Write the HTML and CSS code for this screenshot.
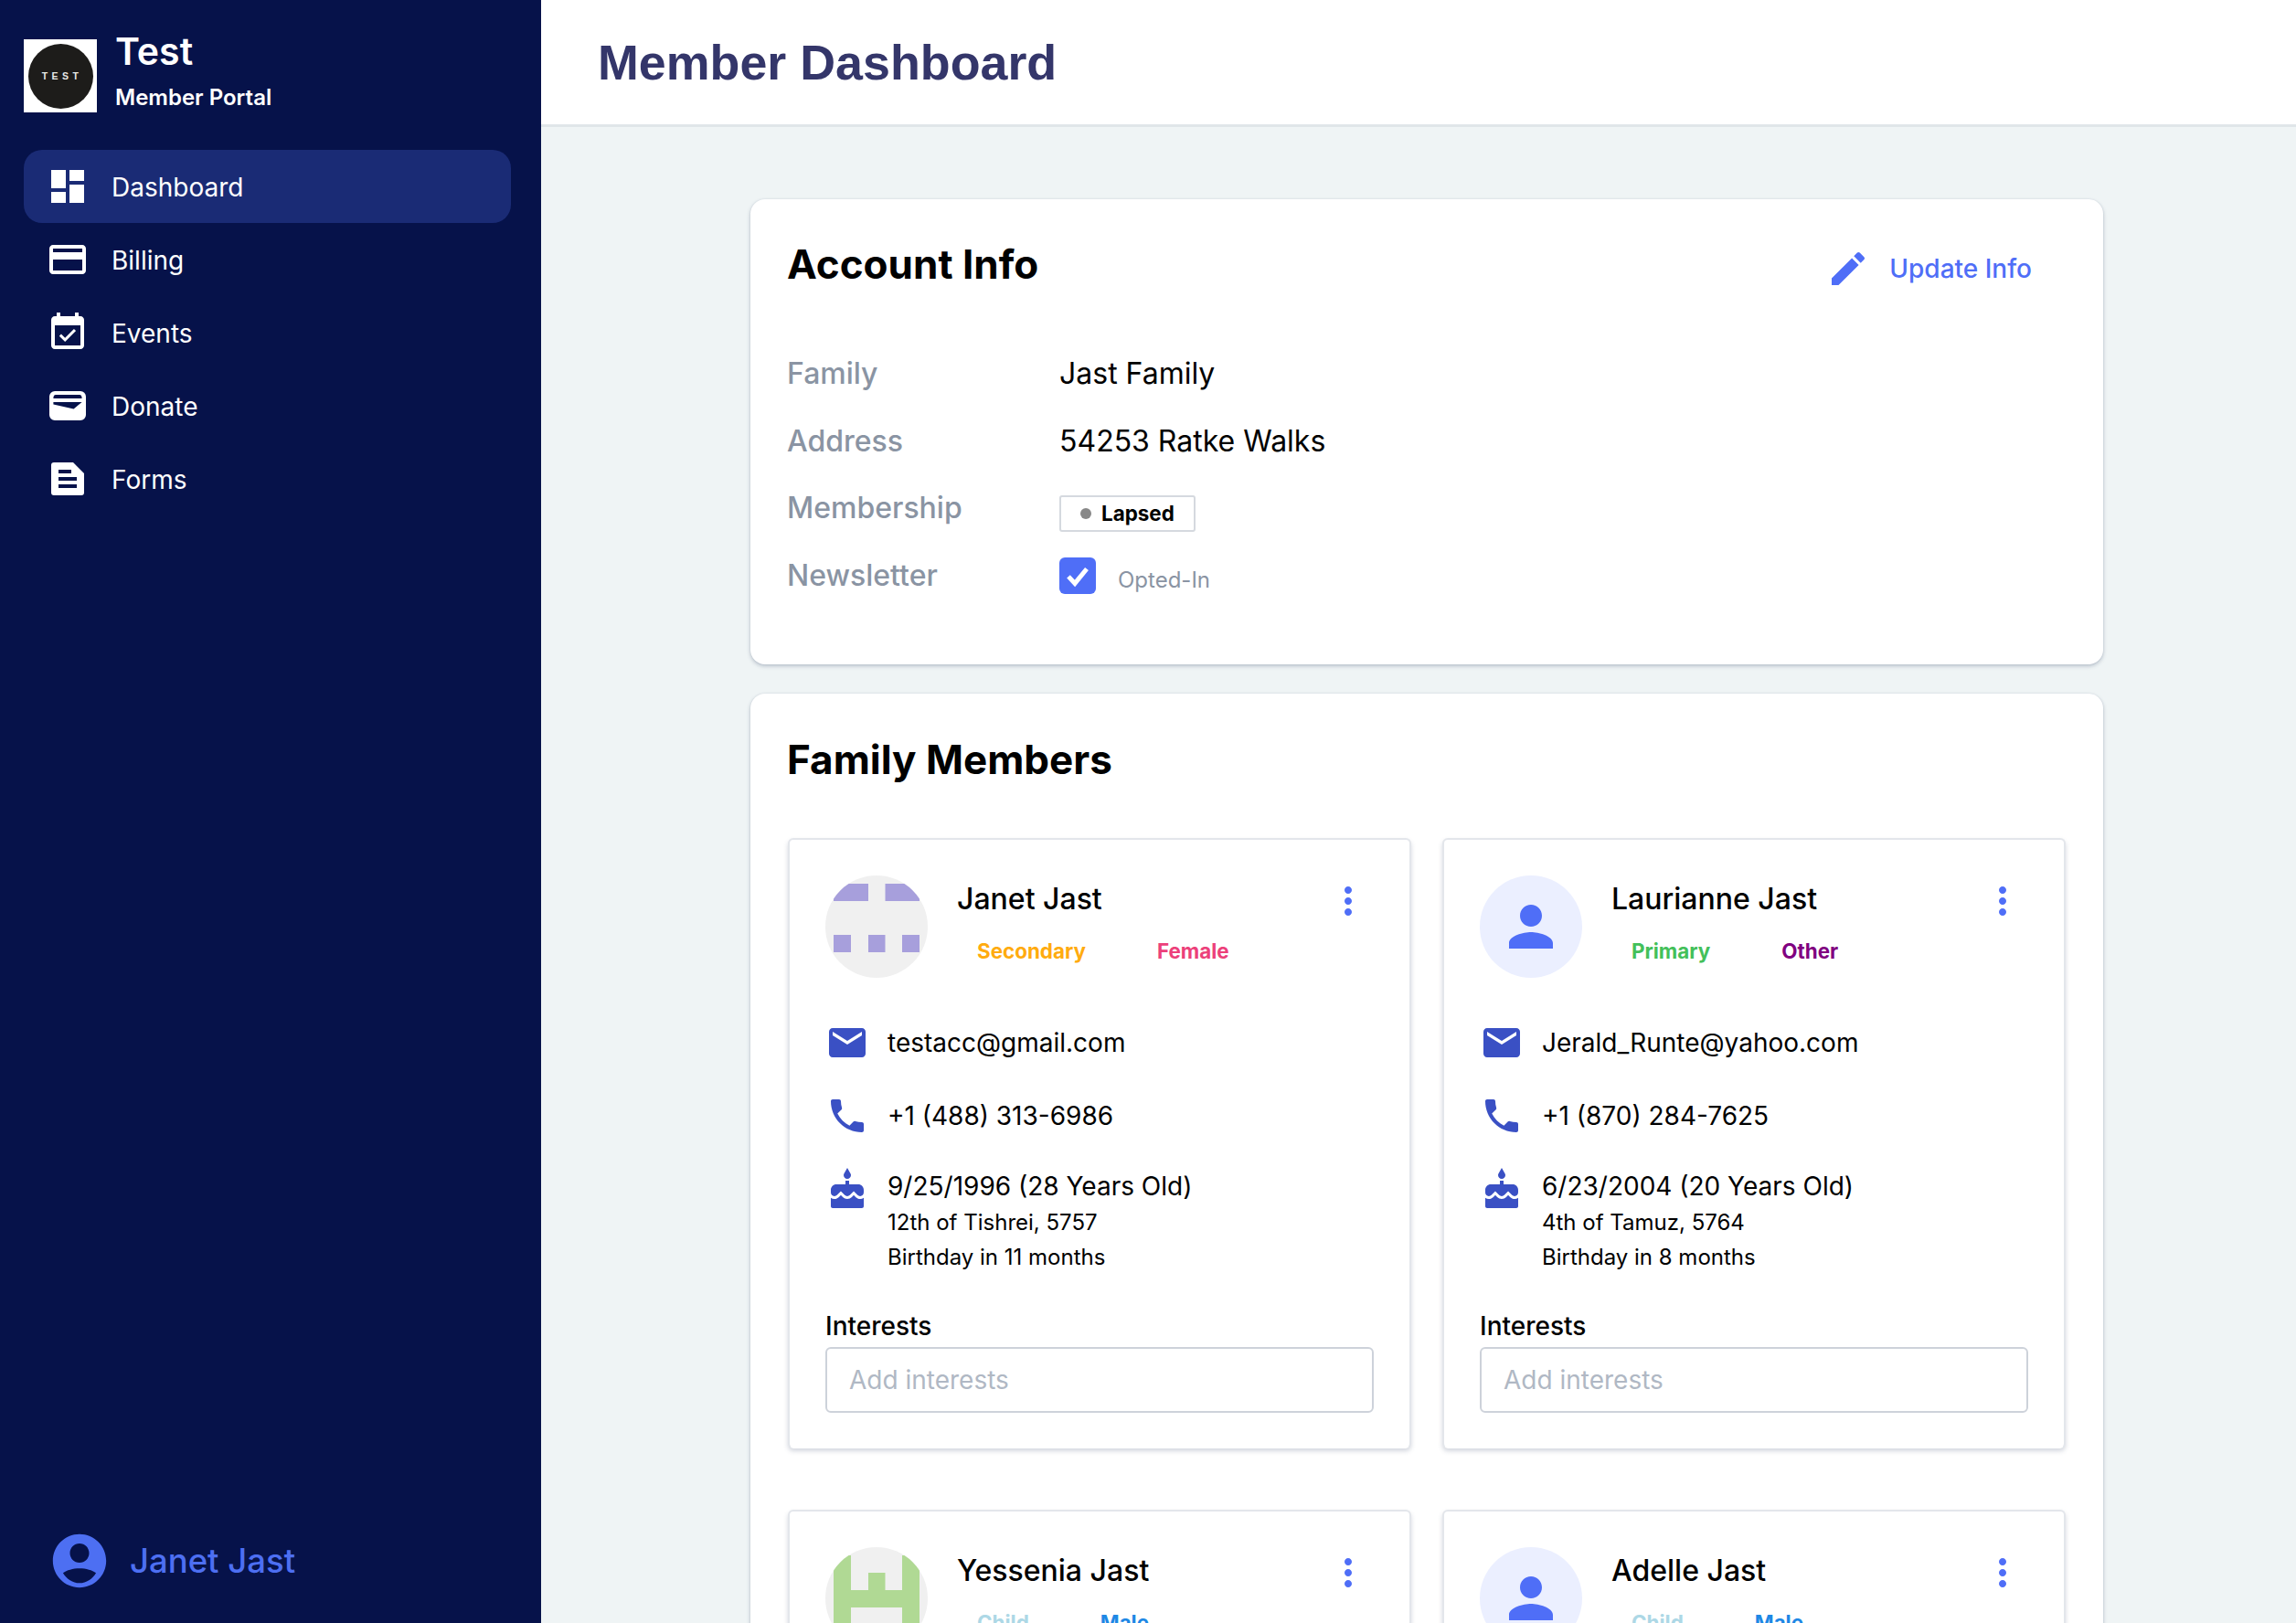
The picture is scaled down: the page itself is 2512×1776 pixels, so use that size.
FILE: index.html
```html
<!DOCTYPE html>
<html lang="en">
<head>
<meta charset="utf-8">
<title>Member Dashboard</title>
<link rel="stylesheet" href="styles.css">
</head>
<body>
<div class="app">
  <aside class="sidebar">
    <div class="brand">
      <div class="logo"><div class="logo-disc">TEST</div></div>
      <div class="brand-text">
        <div class="brand-name">Test</div>
        <div class="brand-sub">Member Portal</div>
      </div>
    </div>
    <nav class="nav">
      <a class="nav-item active"><svg class="icon" viewBox="0 0 24 24"><path d="M3 13h8V3H3v10zm0 8h8v-6H3v6zm10 0h8V11h-8v10zm0-18v6h8V3h-8z"/></svg><span>Dashboard</span></a>
      <a class="nav-item"><svg class="icon" viewBox="0 0 24 24"><path d="M20 4H4c-1.11 0-1.99.89-1.99 2L2 18c0 1.11.89 2 2 2h16c1.11 0 2-.89 2-2V6c0-1.11-.89-2-2-2zm0 14H4v-6h16v6zm0-10H4V6h16v2z"/></svg><span>Billing</span></a>
      <a class="nav-item"><svg class="icon" viewBox="0 0 24 24"><path d="M16.53 11.06 15.47 10l-4.88 4.88-2.12-2.12-1.06 1.06L10.59 17l5.94-5.94zM19 3h-1V1h-2v2H8V1H6v2H5c-1.11 0-1.99.9-1.99 2L3 19c0 1.1.89 2 2 2h14c1.1 0 2-.9 2-2V5c0-1.1-.9-2-2-2zm0 16H5V8h14v11z"/></svg><span>Events</span></a>
      <a class="nav-item"><svg class="icon" viewBox="0 0 24 24"><path fill-rule="evenodd" d="M5 4h14a3 3 0 0 1 3 3v10a3 3 0 0 1-3 3H5a3 3 0 0 1-3-3V7a3 3 0 0 1 3-3zM5.500 6C4.600 6 4.200 6.700 4.200 8H19.800C19.800 6.700 19.400 6 18.500 6H5.500zM4.200 10V11.300L15.300 13.700 19.800 10H4.200z"/></svg><span>Donate</span></a>
      <a class="nav-item"><svg class="icon" viewBox="0 0 24 24"><path fill-rule="evenodd" d="M4.500 3H15L21 9V19.500A1.500 1.500 0 0 1 19.500 21H4.500A1.500 1.500 0 0 1 3 19.500V4.500A1.500 1.500 0 0 1 4.500 3zM7 7V9H14V7H7zM7 11V13H17V11H7zM7 15V17H17V15H7z"/></svg><span>Forms</span></a>
    </nav>
    <div class="user">
      <svg class="user-icon" viewBox="0 0 24 24"><path fill-rule="evenodd" d="M12 2C6.480 2 2 6.480 2 12s4.480 10 10 10 10-4.480 10-10S17.520 2 12 2zm0 3.500c2 0 3.600 1.600 3.600 3.600S14 12.700 12 12.700 8.400 11.100 8.400 9.100 10 5.500 12 5.500zM12 20.300c-2.600 0-4.800-1.500-6.200-3.800C7.200 15.500 9.500 14.800 12 14.800s4.800.7 6.200 1.700c-1.400 2.300-3.600 3.800-6.200 3.800z"/></svg>
      <span class="user-name">Janet Jast</span>
    </div>
  </aside>
  <div class="main">
    <header class="topbar"><h1 class="page-title">Member Dashboard</h1></header>
    <div class="content">
      <section class="panel account">
        <div class="panel-head">
          <h2 class="panel-title">Account Info</h2>
          <a class="update"><svg class="icon" viewBox="0 0 24 24"><path d="M3 17.250V21h3.750L17.810 9.940l-3.750-3.750L3 17.250zM20.710 7.040c.39-.39.39-1.020 0-1.410l-2.340-2.340c-.39-.39-1.020-.39-1.410 0l-1.830 1.830 3.750 3.750 1.830-1.830z"/></svg><span>Update Info</span></a>
        </div>
        <dl class="facts">
          <dt>Family</dt><dd>Jast Family</dd>
          <dt>Address</dt><dd>54253 Ratke Walks</dd>
          <dt>Membership</dt><dd><span class="badge"><i class="badge-dot"></i>Lapsed</span></dd>
          <dt>Newsletter</dt>
          <dd class="newsletter"><span class="checkbox"><svg viewBox="0 0 24 24"><path d="M6 12.500l4.200 4.500 7.800-9.500"/></svg></span><span class="opted">Opted-In</span></dd>
        </dl>
      </section>
      <section class="panel family">
        <h2 class="panel-title family-title">Family Members</h2>
        <div class="members">
          <article class="member">
            <div class="member-head">
              <div class="avatar identicon">
                <svg class="identicon-art purple" viewBox="0 0 112 112">
                  <rect x="9" y="9" width="38" height="19"/><rect x="65.500" y="9" width="37.500" height="19"/>
                  <rect x="9" y="65" width="19" height="19"/><rect x="47" y="65" width="18.500" height="19"/><rect x="84" y="65" width="19" height="19"/>
                </svg>
              </div>
              <div class="member-id">
                <div class="member-name">Janet Jast</div>
                <div class="tags"><span class="tag secondary">Secondary</span><span class="tag female">Female</span></div>
              </div>
              <svg class="icon more" viewBox="0 0 24 24"><path d="M12 8c1.100 0 2-.9 2-2s-.9-2-2-2-2 .9-2 2 .9 2 2 2zm0 2c-1.100 0-2 .9-2 2s.9 2 2 2 2-.9 2-2-.9-2-2-2zm0 6c-1.100 0-2 .9-2 2s.9 2 2 2 2-.9 2-2-.9-2-2-2z"/></svg>
            </div>
            <div class="contact"><svg class="icon" viewBox="0 0 24 24"><path d="M20 4H4c-1.100 0-1.990.9-1.990 2L2 18c0 1.100.9 2 2 2h16c1.100 0 2-.9 2-2V6c0-1.100-.9-2-2-2zm0 4-8 5-8-5V6l8 5 8-5v2z"/></svg><span>testacc@gmail.com</span></div>
            <div class="contact"><svg class="icon" viewBox="0 0 24 24"><path d="M6.620 10.790c1.440 2.830 3.760 5.140 6.590 6.590l2.200-2.200c.27-.27.67-.36 1.020-.24 1.120.37 2.330.57 3.570.57.55 0 1 .45 1 1V20c0 .55-.45 1-1 1-9.390 0-17-7.610-17-17 0-.55.45-1 1-1h3.500c.55 0 1 .45 1 1 0 1.250.2 2.450.57 3.570.11.35.03.74-.25 1.010l-2.200 2.210z"/></svg><span>+1 (488) 313-6986</span></div>
            <div class="contact birth"><svg class="icon" viewBox="0 0 24 24"><path d="M12 6c1.110 0 2-.9 2-2 0-.38-.1-.73-.29-1.030L12 0l-1.710 2.970c-.19.3-.29.65-.29 1.030 0 1.100.9 2 2 2zm4.600 9.990-1.070-1.070-1.080 1.070c-1.300 1.300-3.580 1.310-4.890 0l-1.070-1.070-1.090 1.070C6.750 16.640 5.880 17 4.960 17c-.73 0-1.400-.23-1.960-.61V21c0 .55.45 1 1 1h16c.55 0 1-.45 1-1v-4.610c-.56.38-1.230.61-1.960.61-.92 0-1.790-.36-2.440-1.010zM18 9h-5V7h-2v2H6c-1.660 0-3 1.340-3 3v1.540c0 1.080.88 1.960 1.960 1.960.52 0 1.020-.2 1.380-.57l2.140-2.130 2.130 2.130c.74.74 2.030.74 2.770 0l2.140-2.130 2.130 2.130c.37.37.86.57 1.380.57 1.080 0 1.960-.88 1.960-1.960V12C21 10.340 19.660 9 18 9z"/></svg>
              <div class="birth-text"><div class="birth-date">9/25/1996 (28 Years Old)</div><div class="birth-sub">12th of Tishrei, 5757</div><div class="birth-sub">Birthday in 11 months</div></div>
            </div>
            <div class="interests"><label class="interests-label">Interests</label><div class="field">Add interests</div></div>
          </article>
          <article class="member">
            <div class="member-head">
              <div class="avatar person"><svg class="person-icon" viewBox="0 0 24 24"><path d="M12 12c2.210 0 4-1.790 4-4s-1.790-4-4-4-4 1.790-4 4 1.790 4 4 4zm0 2c-2.670 0-8 1.340-8 4v2h16v-2c0-2.660-5.330-4-8-4z"/></svg></div>
              <div class="member-id">
                <div class="member-name">Laurianne Jast</div>
                <div class="tags"><span class="tag primary">Primary</span><span class="tag other">Other</span></div>
              </div>
              <svg class="icon more" viewBox="0 0 24 24"><path d="M12 8c1.100 0 2-.9 2-2s-.9-2-2-2-2 .9-2 2 .9 2 2 2zm0 2c-1.100 0-2 .9-2 2s.9 2 2 2 2-.9 2-2-.9-2-2-2zm0 6c-1.100 0-2 .9-2 2s.9 2 2 2 2-.9 2-2-.9-2-2-2z"/></svg>
            </div>
            <div class="contact"><svg class="icon" viewBox="0 0 24 24"><path d="M20 4H4c-1.100 0-1.990.9-1.990 2L2 18c0 1.100.9 2 2 2h16c1.100 0 2-.9 2-2V6c0-1.100-.9-2-2-2zm0 4-8 5-8-5V6l8 5 8-5v2z"/></svg><span>Jerald_Runte@yahoo.com</span></div>
            <div class="contact"><svg class="icon" viewBox="0 0 24 24"><path d="M6.620 10.790c1.440 2.830 3.760 5.140 6.590 6.590l2.200-2.200c.27-.27.67-.36 1.020-.24 1.120.37 2.330.57 3.570.57.55 0 1 .45 1 1V20c0 .55-.45 1-1 1-9.390 0-17-7.610-17-17 0-.55.45-1 1-1h3.500c.55 0 1 .45 1 1 0 1.250.2 2.450.57 3.570.11.35.03.74-.25 1.010l-2.200 2.210z"/></svg><span>+1 (870) 284-7625</span></div>
            <div class="contact birth"><svg class="icon" viewBox="0 0 24 24"><path d="M12 6c1.110 0 2-.9 2-2 0-.38-.1-.73-.29-1.030L12 0l-1.710 2.970c-.19.3-.29.65-.29 1.030 0 1.100.9 2 2 2zm4.600 9.990-1.070-1.070-1.080 1.070c-1.300 1.300-3.580 1.310-4.890 0l-1.070-1.070-1.090 1.070C6.750 16.640 5.880 17 4.960 17c-.73 0-1.400-.23-1.960-.61V21c0 .55.45 1 1 1h16c.55 0 1-.45 1-1v-4.610c-.56.38-1.230.61-1.960.61-.92 0-1.790-.36-2.440-1.010zM18 9h-5V7h-2v2H6c-1.660 0-3 1.340-3 3v1.540c0 1.080.88 1.960 1.960 1.960.52 0 1.020-.2 1.380-.57l2.140-2.130 2.130 2.130c.74.74 2.030.74 2.770 0l2.140-2.130 2.130 2.130c.37.37.86.57 1.380.57 1.080 0 1.960-.88 1.960-1.960V12C21 10.340 19.660 9 18 9z"/></svg>
              <div class="birth-text"><div class="birth-date">6/23/2004 (20 Years Old)</div><div class="birth-sub">4th of Tamuz, 5764</div><div class="birth-sub">Birthday in 8 months</div></div>
            </div>
            <div class="interests"><label class="interests-label">Interests</label><div class="field">Add interests</div></div>
          </article>
          <article class="member">
            <div class="member-head">
              <div class="avatar identicon">
                <svg class="identicon-art green" viewBox="0 0 112 112">
                  <rect x="9" y="9" width="19" height="94"/><rect x="84" y="9" width="19" height="94"/>
                  <rect x="47" y="28" width="18.500" height="19"/><rect x="9" y="47" width="94" height="19"/>
                </svg>
              </div>
              <div class="member-id">
                <div class="member-name">Yessenia Jast</div>
                <div class="tags"><span class="tag child">Child</span><span class="tag male">Male</span></div>
              </div>
              <svg class="icon more" viewBox="0 0 24 24"><path d="M12 8c1.100 0 2-.9 2-2s-.9-2-2-2-2 .9-2 2 .9 2 2 2zm0 2c-1.100 0-2 .9-2 2s.9 2 2 2 2-.9 2-2-.9-2-2-2zm0 6c-1.100 0-2 .9-2 2s.9 2 2 2 2-.9 2-2-.9-2-2-2z"/></svg>
            </div>
          </article>
          <article class="member">
            <div class="member-head">
              <div class="avatar person"><svg class="person-icon" viewBox="0 0 24 24"><path d="M12 12c2.210 0 4-1.790 4-4s-1.790-4-4-4-4 1.790-4 4 1.790 4 4 4zm0 2c-2.670 0-8 1.340-8 4v2h16v-2c0-2.660-5.330-4-8-4z"/></svg></div>
              <div class="member-id">
                <div class="member-name">Adelle Jast</div>
                <div class="tags"><span class="tag child">Child</span><span class="tag male">Male</span></div>
              </div>
              <svg class="icon more" viewBox="0 0 24 24"><path d="M12 8c1.100 0 2-.9 2-2s-.9-2-2-2-2 .9-2 2 .9 2 2 2zm0 2c-1.100 0-2 .9-2 2s.9 2 2 2 2-.9 2-2-.9-2-2-2zm0 6c-1.100 0-2 .9-2 2s.9 2 2 2 2-.9 2-2-.9-2-2-2z"/></svg>
            </div>
          </article>
        </div>
      </section>
    </div>
  </div>
</div>
</body>
</html>
```
FILE: styles.css
```css
* { box-sizing: border-box; }
html, body { margin: 0; height: 100%; overflow: hidden; }
body { font-family: Inter, "Liberation Sans", sans-serif; color: #000; background: #eff4f5; }
.app { display: flex; height: 1776px; overflow: hidden; }
.icon { width: 48px; height: 48px; flex: none; display: block; fill: currentColor; }

.sidebar { width: 592px; flex: none; background: #06124a; color: #fff; display: flex; flex-direction: column; padding: 0 33px 0 26px; }
.brand { display: flex; align-items: flex-start; gap: 20px; padding-top: 28px; height: 164px; }
.logo { width: 80px; height: 80px; margin-top: 15px; background: #fff; display: flex; align-items: center; justify-content: center; flex: none; }
.logo-disc { width: 71px; height: 71px; border-radius: 50%; background: #1d1c1a; color: #e9e9e6; font: 700 10.5px "Liberation Sans", sans-serif; letter-spacing: 4.4px; text-indent: 4px; display: flex; align-items: center; justify-content: center; }
.brand-name { font-size: 41px; font-weight: 600; line-height: 56px; }
.brand-sub { font-size: 24px; font-weight: 600; line-height: 36px; margin-top: 5px; }
.nav { display: flex; flex-direction: column; }
.nav-item { display: flex; align-items: center; gap: 24px; height: 80px; padding-left: 24px; border-radius: 20px; font-size: 28px; }
.nav-item span { padding-top: 2px; }
.nav-item.active { background: #1a2b75; }
.user { margin-top: auto; display: flex; align-items: center; gap: 20px; padding: 0 0 33px 26px; color: #4d6ff2; }
.user-icon { width: 70px; height: 70px; fill: currentColor; flex: none; }
.user-name { font-size: 36.5px; font-weight: 500; }

.main { flex: 1; min-width: 0; display: flex; flex-direction: column; }
.topbar { height: 139px; flex: none; background: #fff; border-bottom: 3px solid #e0e6e9; padding-left: 62px; display: flex; align-items: center; }
.page-title { margin: 0; font-family: "Liberation Sans", Arial, sans-serif; font-size: 53.8px; font-weight: 700; color: #34366a; }
.content { padding: 79px 211px 0 229px; display: flex; flex-direction: column; gap: 32px; }
.panel { background: #fff; border-radius: 16px; box-shadow: 0 2px 4px rgba(60, 75, 110, .3), 0 0 2px rgba(60, 75, 110, .12); }
.account { height: 509px; padding: 0 41px 0 40px; }
.panel-head { display: flex; justify-content: space-between; align-items: flex-start; padding-top: 44px; height: 146px; }
.panel-title { margin: 0; font-size: 44px; font-weight: 700; line-height: 54px; }
.update { display: flex; align-items: center; gap: 21px; color: #4f6ef7; font-size: 28px; font-weight: 500; margin: 8px 37px 0 0; }
.facts { margin: 0; display: grid; grid-template-columns: 298px 1fr; grid-auto-rows: 73.6px; font-size: 32px; padding-top: 21px; }
.facts dt { color: #8a94a3; font-weight: 500; line-height: 48px; }
.facts dd { margin: 0; line-height: 48px; }
.badge { display: inline-flex; align-items: center; height: 40px; width: 149px; margin-top: 10px; padding-left: 21px; border: 2px solid #d5d9df; border-radius: 3px; font-size: 22.4px; font-weight: 700; line-height: 36px; vertical-align: top; }
.badge-dot { width: 12px; height: 12px; border-radius: 50%; background: #888; margin-right: 11px; }
.newsletter { display: flex; align-items: flex-start; gap: 24px; }
.checkbox { width: 40px; height: 40px; border-radius: 6px; background: #4f6ef7; display: block; margin-top: 4px; }
.checkbox svg { width: 40px; height: 40px; display: block; fill: none; stroke: #fff; stroke-width: 3; }
.opted { font-size: 24px; color: #8a94a3; line-height: 48px; margin-top: 5px; }

.family { padding: 0 41px 40px; }
.family-title { padding-top: 45px; height: 158px; margin-left: -1px; }
.members { display: grid; grid-template-columns: 682px 682px; column-gap: 34px; row-gap: 67px; }
.member { background: #fff; border: 2px solid #e3e6eb; border-bottom-width: 0; border-radius: 6px; box-shadow: 0 3px 5px rgba(60, 75, 110, .22); padding: 39px 39px 40px; height: 668px; }
.member-head { display: flex; align-items: flex-start; height: 112px; }
.avatar { width: 112px; height: 112px; border-radius: 50%; overflow: hidden; flex: none; display: flex; align-items: center; justify-content: center; }
.avatar.identicon { background: #f0f0f0; }
.avatar.person { background: #ebefff; }
.identicon-art { width: 112px; height: 112px; display: block; }
.identicon-art.purple { fill: #a79fdc; }
.identicon-art.green { fill: #b0d994; }
.person-icon { width: 72px; height: 72px; fill: #4f6ef7; }
.member-id { margin-left: 32px; flex: 1; }
.member-name { font-size: 32px; font-weight: 500; line-height: 44px; margin-top: 4px; }
.tags { display: flex; gap: 34px; margin-top: 17px; }
.tag { font-size: 22.4px; font-weight: 700; line-height: 36px; padding: 0 22px; }
.tag.secondary { color: #ffab0f; }
.tag.female { color: #ec407a; }
.tag.primary { color: #43c05a; }
.tag.other { color: #800080; }
.tag.child { color: #add8e6; }
.tag.male { color: #1e88e5; }
.more { color: #4f6ef7; margin: 4px 4px 0 0; }
.contact { display: flex; align-items: center; gap: 20px; height: 80px; font-size: 28px; color: #000; }
.member-head + .contact { margin-top: 31px; }
.contact .icon { color: #3a50c4; }
.birth { align-items: flex-start; height: auto; margin-top: 17px; }
.birth-text { margin-top: -1px; }
.birth-date { line-height: 42px; }
.birth-sub { font-size: 24px; line-height: 38.4px; }
.interests { margin-top: 37px; }
.interests-label { display: block; font-size: 28px; font-weight: 500; line-height: 36px; margin-bottom: 5px; }
.field { height: 72px; border: 2px solid #cdd2da; border-radius: 6px; padding-left: 24px; font-size: 28px; line-height: 68px; color: #b0b8c4; }
```
